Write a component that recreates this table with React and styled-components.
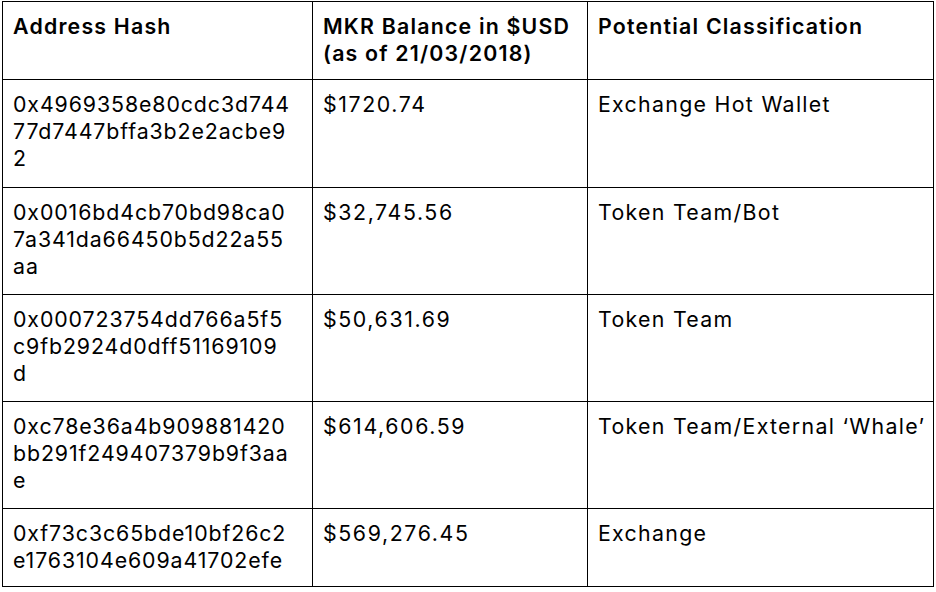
import React from "react";
import styled, { createGlobalStyle } from "styled-components";

const Global = createGlobalStyle`
  html, body { margin: 0; padding: 0; background: #fff; }
  body { font-family: "Inter", "Lato", sans-serif; color: #000; }
`;

const Page = styled.div`
  padding: 1px 0 0 2px;
  width: 936px;
  height: 592px;
  box-sizing: border-box;
  background: #fff;
`;

const Table = styled.div`
  display: grid;
  grid-template-columns: 310px 275px 346px;
  grid-template-rows: 78px 108px 107px 107px 107px 78px;
  border-top: 1px solid #000;
  border-left: 1px solid #000;
  width: max-content;
`;

const Cell = styled.div`
  box-sizing: border-box;
  border-right: 1px solid #000;
  border-bottom: 1px solid #000;
  padding: 11px 4px 0 10px;
  font-size: 21.33px;
  line-height: 27px;
  font-weight: ${(p) => (p.$head ? 600 : 400)};
  letter-spacing: ${(p) => (p.$head ? "1.2px" : "1.3px")};
  color: #000;
`;

const Line = styled.span`
  display: block;
  white-space: nowrap;
`;

const HashLine = styled(Line)`
  letter-spacing: 0.9px;
`;

const MoneyLine = styled(Line)`
  letter-spacing: 1.6px;
`;

const rows = [
  {
    hash: ["0x4969358e80cdc3d744", "77d7447bffa3b2e2acbe9", "2"],
    usd: "$1720.74",
    cls: "Exchange Hot Wallet",
  },
  {
    hash: ["0x0016bd4cb70bd98ca0", "7a341da66450b5d22a55", "aa"],
    usd: "$32,745.56",
    cls: "Token Team/Bot",
  },
  {
    hash: ["0x000723754dd766a5f5", "c9fb2924d0dff51169109", "d"],
    usd: "$50,631.69",
    cls: "Token Team",
  },
  {
    hash: ["0xc78e36a4b909881420", "bb291f249407379b9f3aa", "e"],
    usd: "$614,606.59",
    cls: "Token Team/External \u2018Whale\u2019",
  },
  {
    hash: ["0xf73c3c65bde10bf26c2", "e1763104e609a41702efe"],
    usd: "$569,276.45",
    cls: "Exchange",
  },
];

export default function App() {
  return (
    <>
      <Global />
      <Page>
        <Table>
          <Cell $head>
            <Line>Address Hash</Line>
          </Cell>
          <Cell $head>
            <Line>MKR Balance in $USD</Line>
            <Line>(as of 21/03/2018)</Line>
          </Cell>
          <Cell $head>
            <Line>Potential Classification</Line>
          </Cell>
          {rows.map((r) => (
            <React.Fragment key={r.hash[0]}>
              <Cell>
                {r.hash.map((h) => (
                  <HashLine key={h}>{h}</HashLine>
                ))}
              </Cell>
              <Cell>
                <MoneyLine>{r.usd}</MoneyLine>
              </Cell>
              <Cell>
                <Line>{r.cls}</Line>
              </Cell>
            </React.Fragment>
          ))}
        </Table>
      </Page>
    </>
  );
}
